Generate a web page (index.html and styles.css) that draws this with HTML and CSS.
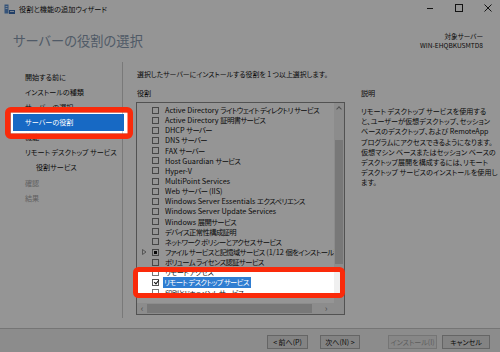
FILE: index.html
```html
<!DOCTYPE html>
<html lang="ja">
<head>
<meta charset="utf-8">
<title>役割と機能の追加ウィザード</title>
<link rel="stylesheet" href="styles.css">
</head>
<body>
<div class="window">
  <div class="titlebar">
    <svg class="appicon" width="11" height="11" viewBox="0 0 11 11">
      <rect x="0.5" y="0.5" width="4" height="9" fill="#5b8fd0"/>
      <rect x="1.5" y="2" width="2" height="1" fill="#d8e6f6"/>
      <rect x="1.5" y="4" width="2" height="1" fill="#d8e6f6"/>
      <rect x="5" y="6" width="6" height="4" fill="#3b6db0"/>
      <rect x="6" y="7" width="4" height="1" fill="#cfe0f3"/>
    </svg>
    <span class="title">役割と機能の追加ウィザード</span>
    <div class="controls">
      <svg width="10" height="10" viewBox="0 0 10 10"><path d="M2 5.5H8" stroke="#222" stroke-width="1"/></svg>
      <svg width="10" height="10" viewBox="0 0 10 10"><rect x="1.5" y="1.5" width="7" height="7" fill="none" stroke="#222" stroke-width="1"/></svg>
      <svg width="10" height="10" viewBox="0 0 10 10"><path d="M1.5 1.5L8.5 8.5M8.5 1.5L1.5 8.5" stroke="#222" stroke-width="1"/></svg>
    </div>
  </div>
  <div class="header">
    <h1 class="heading">サーバーの役割の選択</h1>
    <div class="target">
      <div>対象サーバー</div>
      <div>WIN-EHQBKUSMTD8</div>
    </div>
  </div>
  <div class="main">
    <ul class="nav">
      <li>開始する前に</li>
      <li>インストールの種類</li>
      <li>サーバーの選択</li>
      <li class="active">サーバーの役割</li>
      <li>機能</li>
      <li>リモート デスクトップ サービス</li>
      <li class="sub">役割サービス</li>
      <li class="disabled">確認</li>
      <li class="disabled">結果</li>
    </ul>
    <div class="content">
      <p class="intro">選択したサーバーにインストールする役割を 1 つ以上選択します。</p>
      <div class="columns">
        <div class="roles">
          <div class="label">役割</div>
          <div class="listbox">
            <div class="listarea">
              <ul class="rows">
                <li><span class="cb"></span><span class="txt">Active Directory <span class="ja">ライトウェイト ディレクトリ サービス</span></span></li>
                <li><span class="cb"></span><span class="txt">Active Directory <span class="ja">証明書サービス</span></span></li>
                <li><span class="cb"></span><span class="txt">DHCP <span class="ja">サーバー</span></span></li>
                <li><span class="cb"></span><span class="txt">DNS <span class="ja">サーバー</span></span></li>
                <li><span class="cb"></span><span class="txt">FAX <span class="ja">サーバー</span></span></li>
                <li><span class="cb"></span><span class="txt">Host Guardian <span class="ja">サービス</span></span></li>
                <li><span class="cb"></span><span class="txt">Hyper-V</span></li>
                <li><span class="cb"></span><span class="txt">MultiPoint Services</span></li>
                <li><span class="cb"></span><span class="txt">Web <span class="ja">サーバー</span> (IIS)</span></li>
                <li><span class="cb"></span><span class="txt">Windows Server Essentials <span class="ja">エクスペリエンス</span></span></li>
                <li><span class="cb"></span><span class="txt">Windows Server Update Services</span></li>
                <li><span class="cb"></span><span class="txt">Windows <span class="ja">展開サービス</span></span></li>
                <li><span class="cb"></span><span class="txt"><span class="ja">デバイス正常性構成証明</span></span></li>
                <li><span class="cb"></span><span class="txt"><span class="ja">ネットワーク ポリシーとアクセス サービス</span></span></li>
                <li><svg class="exp" width="5" height="6" viewBox="0 0 5 6"><path d="M0.5 0.5L4 3L0.5 5.5Z" fill="none" stroke="#777" stroke-width="0.8"/></svg><span class="cb partial"></span><span class="txt"><span class="ja">ファイル サービスと記憶域サービス</span> (1/12 <span class="ja">個をインストール済み</span>)</span></li>
                <li><span class="cb"></span><span class="txt"><span class="ja">ボリューム ライセンス認証サービス</span></span></li>
                <li><span class="cb"></span><span class="txt"><span class="ja">リモート アクセス</span></span></li>
                <li><span class="cb checked"></span><span class="txt selected"><span class="ja">リモート デスクトップ サービス</span></span></li>
                <li><span class="cb"></span><span class="txt"><span class="ja">印刷とドキュメント サービス</span></span></li>
              </ul>
              <div class="vscroll">
                <span class="arrow up"></span>
                <span class="vthumb"></span>
              </div>
            </div>
            <div class="hscroll">
              <span class="harrow">&#8249;</span>
              <span class="hthumb"></span>
              <span class="harrow right">&#8250;</span>
              <span class="corner"></span>
            </div>
          </div>
        </div>
        <div class="desc">
          <div class="label">説明</div>
          <p class="desctext">リモート デスクトップ サービスを使用する<br>と、ユーザーが仮想デスクトップ、セッション<br>ベースのデスクトップ、および RemoteApp<br>プログラムにアクセスできるようになります。<br>仮想マシン ベースまたはセッション ベースの<br>デスクトップ展開を構成するには、リモート<br>デスクトップ サービスのインストールを使用し<br>ます。</p>
        </div>
      </div>
    </div>
  </div>
  <div class="footer">
    <button class="btn prev">&lt; 前へ(P)</button>
    <button class="btn next">次へ(N) &gt;</button>
    <button class="btn install" disabled>インストール(I)</button>
    <button class="btn cancel">キャンセル</button>
  </div>

  <svg class="dim" width="500" height="352" viewBox="0 0 500 352">
    <path fill="rgba(0,0,0,0.415)" fill-rule="evenodd" d="M0 0H500V352H0Z M11 112.5H128V133.5H11Z M138 272H340V293H138Z"/>
    <rect x="7.75" y="109.75" width="122.5" height="26.5" rx="3" fill="none" stroke="#fa2a0a" stroke-width="5.5"/>
    <rect x="135.5" y="269.5" width="207" height="26" rx="3" fill="none" stroke="#fa2a0a" stroke-width="5"/>
  </svg>
</div>
</body>
</html>
```
FILE: styles.css
```css
* { box-sizing: border-box; }
html, body { margin: 0; padding: 0; }
body {
  width: 500px;
  height: 352px;
  overflow: hidden;
  background: #fff;
  font-family: "Noto Sans CJK JP", "Noto Sans", sans-serif;
  font-feature-settings: "palt";
  color: #111;
}
.window {
  position: relative;
  width: 500px;
  height: 352px;
  display: flex;
  flex-direction: column;
  background: #fff;
}
.titlebar {
  height: 18px;
  display: flex;
  align-items: center;
  padding-left: 4px;
  flex: none;
}
.appicon { display: block; }
.title {
  font-size: 7.2px;
  margin-left: 4px;
  line-height: 10px;
}
.controls {
  margin-left: auto;
  display: flex;
  gap: 19px;
  padding-right: 7px;
  align-self: flex-start;
  padding-top: 3px;
}
.controls svg { display: block; }
.header {
  height: 42px;
  flex: none;
  display: flex;
  justify-content: space-between;
  align-items: flex-start;
  padding: 0 17px 0 13px;
}
.heading {
  margin: 13px 0 0;
  font-size: 13.2px;
  font-weight: normal;
  line-height: 20px;
  color: #8a9bb0;
  letter-spacing: 0.1px;
}
.target {
  margin-top: 14px;
  text-align: right;
  font-size: 6.6px;
  line-height: 9px;
}
.main {
  flex: none;
  height: 268px;
  display: flex;
}
.nav {
  list-style: none;
  margin: 2px 0 10px;
  padding: 8px 0 0;
  width: 123px;
  border-right: 1px solid #d0d0d0;
  font-size: 7.1px;
}
.nav li {
  height: 15.1px;
  line-height: 15.1px;
  padding-left: 25px;
  white-space: nowrap;
}
.nav li.sub { padding-left: 36px; }
.nav li.active {
  background: #1769c4;
  color: #fff;
  margin: 0 -2px 0 13px;
  padding-left: 12px;
  height: 17px;
  line-height: 17px;
  position: relative;
  top: -1px;
}
.nav li.active + li { margin-top: -2px; }
.nav li.disabled { color: #a8a8a8; }
.content {
  flex: 1;
  padding-left: 14px;
  font-size: 7.1px;
}
.intro {
  margin: 9px 0 0;
  line-height: 10px;
  white-space: nowrap;
  font-size: 6.9px;
}
.columns {
  display: flex;
  margin-top: 9px;
}
.label {
  line-height: 10px;
  height: 10px;
  margin-bottom: 1px;
}
.roles {
  width: 209px;
  margin-left: -1px;
}
.roles .label { padding-left: 1px; margin-bottom: 4px; }
.listbox {
  height: 213px;
  border: 1px solid #8c8c8c;
  display: flex;
  flex-direction: column;
  background: #fff;
}
.listarea {
  flex: 1;
  display: flex;
  min-height: 0;
}
.rows {
  list-style: none;
  margin: 0;
  padding: 2px 0 0;
  flex: 1;
  overflow: hidden;
  min-width: 0;
  font-size: 7.3px;
}
.rows li {
  height: 10.15px;
  line-height: 10.15px;
  display: flex;
  align-items: center;
  padding-left: 15px;
  white-space: nowrap;
  position: relative;
}
.ja { letter-spacing: -0.6px; }
.exp {
  position: absolute;
  left: 5px;
  top: 2px;
  display: block;
}
.cb {
  flex: none;
  width: 7px;
  height: 7px;
  border: 1px solid #7a7a7a;
  background: #fff;
  margin-right: 5px;
  position: relative;
}
.cb.partial::after {
  content: "";
  position: absolute;
  left: 1px; top: 1px; right: 1px; bottom: 1px;
  background: #111;
}
.cb.checked { border-color: #555; }
.cb.checked::after {
  content: "";
  position: absolute;
  left: 1.5px;
  top: -0.5px;
  width: 2px;
  height: 4px;
  border-right: 1.2px solid #111;
  border-bottom: 1.2px solid #111;
  transform: rotate(40deg);
}
.txt { padding: 0 1px; }
.txt.selected {
  background: #2f7dd1;
  color: #fff;
  margin-left: -1px;
  padding: 0 2px 0 1px;
}
.vscroll {
  flex: none;
  width: 10px;
  background: #f0f0f0;
  position: relative;
}
.arrow.up {
  position: absolute;
  left: 3px;
  top: 4px;
  width: 4px;
  height: 4px;
  border-left: 1px solid #888;
  border-top: 1px solid #888;
  transform: rotate(45deg);
}
.vthumb {
  position: absolute;
  left: 1px;
  right: 1px;
  top: 37px;
  height: 124px;
  background: #cdcdcd;
}
.hscroll {
  flex: none;
  height: 11px;
  background: #f0f0f0;
  display: flex;
  align-items: center;
  font-size: 9px;
  color: #888;
}
.harrow {
  width: 10px;
  text-align: center;
  line-height: 11px;
  flex: none;
}
.hthumb {
  height: 9px;
  background: #cdcdcd;
  width: 165px;
  flex: none;
}
.harrow.right { margin-left: 9px; }
.corner {
  margin-left: auto;
  width: 10px;
  height: 11px;
  background: #f0f0f0;
}
.desc {
  margin-left: 16px;
}
.desctext {
  margin: 8px 0 0;
  font-size: 7.1px;
  line-height: 10.2px;
  white-space: nowrap;
}
.footer {
  flex: 1;
  background: #f0f0f0;
  border-top: 1px solid #c9c9c9;
  display: flex;
  align-items: flex-start;
  padding: 6px 10px 0 0;
  justify-content: flex-end;
}
.btn {
  font-family: inherit;
  font-feature-settings: "palt";
  font-size: 7px;
  height: 14px;
  padding: 0;
  background: #e1e1e1;
  border: 1px solid #adadad;
  color: #111;
  line-height: 12px;
}
.prev { width: 41px; }
.next { width: 40px; margin-left: 12px; }
.install { width: 49px; margin-left: 28px; color: #a0a0a0; border-color: #c8c8c8; background: #e8e8e8; }
.cancel { width: 48px; margin-left: 5px; }
.dim {
  position: absolute;
  left: 0;
  top: 0;
  pointer-events: none;
}
```
